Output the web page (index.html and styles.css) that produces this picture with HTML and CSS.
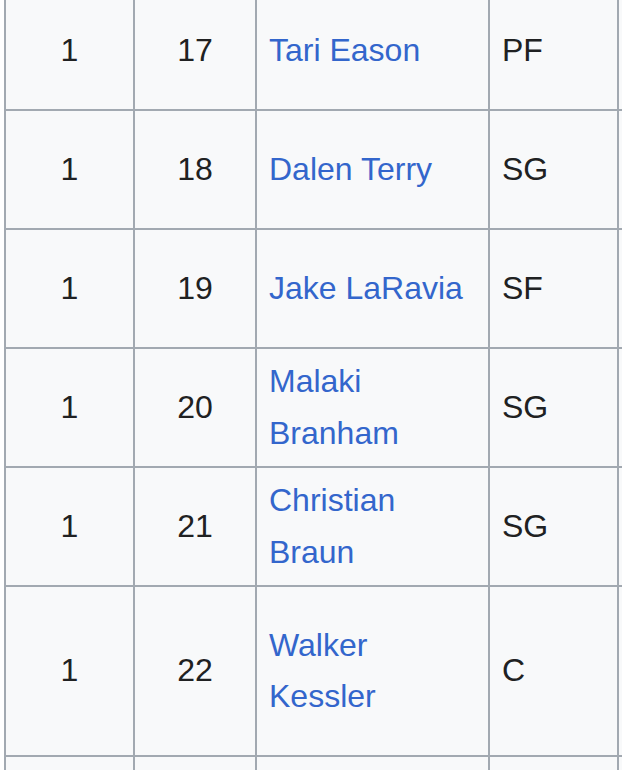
FILE: index.html
```html
<!DOCTYPE html>
<html lang="en">
<head>
<meta charset="utf-8">
<title>Draft picks</title>
<link rel="stylesheet" href="styles.css">
</head>
<body>
<div class="frame">
<table class="wikitable">
  <colgroup>
    <col class="c-rnd"><col class="c-pick"><col class="c-player"><col class="c-pos"><col class="c-next">
  </colgroup>
  <tbody>
    <tr class="row-2"><td class="num">1</td><td class="num">17</td><td><a href="#">Tari Eason</a></td><td>PF</td><td></td></tr>
    <tr class="row-2"><td class="num">1</td><td class="num">18</td><td><a href="#">Dalen Terry</a></td><td>SG</td><td></td></tr>
    <tr class="row-2"><td class="num">1</td><td class="num">19</td><td><a href="#">Jake LaRavia</a></td><td>SF</td><td></td></tr>
    <tr class="row-2"><td class="num">1</td><td class="num">20</td><td><a href="#">Malaki Branham</a></td><td>SG</td><td></td></tr>
    <tr class="row-2"><td class="num">1</td><td class="num">21</td><td><a href="#">Christian Braun</a></td><td>SG</td><td></td></tr>
    <tr class="row-3"><td class="num">1</td><td class="num">22</td><td><a href="#">Walker Kessler</a></td><td>C</td><td></td></tr>
    <tr class="row-2"><td class="num"></td><td class="num"></td><td></td><td></td><td></td></tr>
  </tbody>
</table>
</div>
</body>
</html>
```
FILE: styles.css
```css
html, body {
  margin: 0;
  padding: 0;
  background: #ffffff;
}

.frame {
  width: 622px;
  height: 770px;
  overflow: hidden;
}

.wikitable {
  margin: -10px 0 0 4px;
  border-collapse: collapse;
  table-layout: fixed;
  width: 713px;
  background: #f8f9fa;
  color: #202122;
  font-family: "Liberation Sans", Arial, sans-serif;
  font-size: 32px;
  line-height: 51.5px;
}

.c-rnd { width: 129px; }
.c-pick { width: 122px; }
.c-player { width: 233px; }
.c-pos { width: 129px; }
.c-next { width: 100px; }

.row-2 { height: 119px; }
.row-3 { height: 170px; }

.wikitable td {
  border: 2px solid #a2a9b1;
  padding: 7px 12px;
  vertical-align: middle;
  text-align: left;
}

.wikitable td.num {
  text-align: center;
}

.wikitable a {
  color: #3366cc;
  text-decoration: none;
}
```
